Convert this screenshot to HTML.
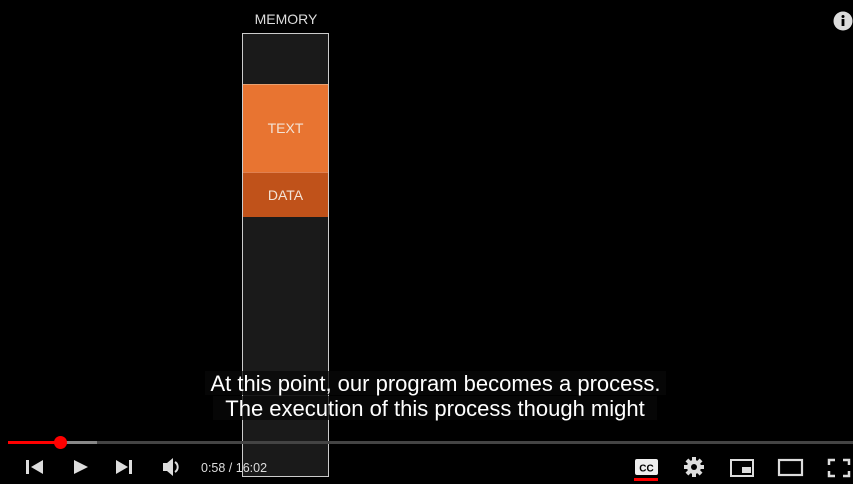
<!DOCTYPE html>
<html><head><style>
body{margin:0;width:853px;height:484px;background:#000;position:relative;overflow:hidden;font-family:"Liberation Sans",sans-serif}
.a{position:absolute}
</style></head><body>
<div class="a" style="left:242px;top:11px;width:88px;text-align:center;color:#ddd;font-size:14px">MEMORY</div>
<div class="a" style="left:242px;top:33px;width:85px;height:442px;border:1px solid #ccc;background:#1a1a1a"></div>
<div class="a" style="left:243px;top:84px;width:85px;height:87px;background:#e87431;border-top:1px solid #e8a070;color:#f3e3d6;font-size:14px;text-align:center;line-height:87px">TEXT</div>
<div class="a" style="left:243px;top:172px;width:85px;height:44px;background:#c0521a;border-top:1px solid #e08050;color:#f3e3d6;font-size:14px;text-align:center;line-height:44px">DATA</div>
<svg class="a" style="left:833px;top:11px" width="20" height="20"><circle cx="10" cy="10" r="9.5" fill="#ddd"/><rect x="8.6" y="8" width="2.8" height="7" fill="#000"/><circle cx="10" cy="5.5" r="1.5" fill="#000"/></svg>
<div class="a" style="left:205px;top:371px;width:461px;height:24px;background:rgba(8,8,8,.75);color:#fff;font-size:22px;line-height:25px;text-align:center;white-space:nowrap">At this point, our program becomes a process.</div>
<div class="a" style="left:213px;top:396px;width:444px;height:24px;background:rgba(8,8,8,.75);color:#fff;font-size:22px;line-height:25px;text-align:center;white-space:nowrap">The execution of this process though might</div>
<div class="a" style="left:8px;top:441px;width:845px;height:3px;background:#444"></div>
<div class="a" style="left:8px;top:441px;width:89px;height:3px;background:#888"></div>
<div class="a" style="left:8px;top:441px;width:52px;height:3px;background:#f00"></div>
<div class="a" style="left:54px;top:436px;width:13px;height:13px;border-radius:50%;background:#f00"></div>
<svg class="a" style="left:0;top:452px" width="300" height="32" fill="#ddd">
<rect x="26" y="8" width="3" height="14"/><path d="M43 8 L31 15 L43 22Z"/>
<path d="M74 8 L88 15 L74 22Z"/>
<path d="M116 8 L128 15 L116 22Z"/><rect x="129" y="8" width="3" height="14"/>
<path d="M163 11h4l6-5v18l-6-5h-4z"/><path d="M175 10a6 6 0 0 1 0 10" stroke="#ddd" stroke-width="2" fill="none"/>
<text x="201" y="20" font-size="12.5" font-family="Liberation Sans" fill="#ddd">0:58 / 16:02</text>
</svg>
<svg class="a" style="left:620px;top:452px" width="233" height="32">
<rect x="15" y="7" width="23" height="16" rx="2" fill="#eee"/>
<text x="26.5" y="19.5" font-size="10" font-weight="bold" text-anchor="middle" fill="#000" font-family="Liberation Sans">CC</text>
<rect x="14" y="26" width="24" height="3" fill="#f00"/>
<g transform="translate(74,15)" fill="#ddd"><circle r="7"/><g><rect x="-2" y="-10" width="4" height="20"/><rect x="-10" y="-2" width="20" height="4"/><rect x="-2" y="-10" width="4" height="20" transform="rotate(45)"/><rect x="-2" y="-10" width="4" height="20" transform="rotate(-45)"/></g><circle r="3" fill="#000"/></g>
<rect x="111" y="8" width="22" height="16" fill="none" stroke="#ddd" stroke-width="2"/><rect x="122" y="15" width="9" height="6" fill="#ddd"/>
<rect x="159" y="8" width="23" height="15" fill="none" stroke="#ddd" stroke-width="2.2"/>
<path d="M209 13V8h6M223 8h6v5M229 19v5h-6M215 24h-6v-5" fill="none" stroke="#ddd" stroke-width="2.5"/>
</svg>
</body></html>
